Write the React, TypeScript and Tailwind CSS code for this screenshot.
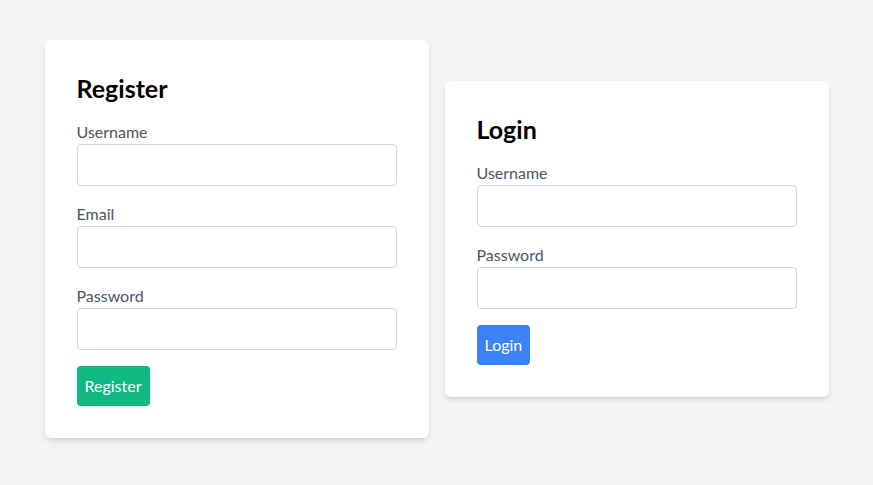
import React from "react";

function Field({ label, type = "text" }: { label: string; type?: string }) {
  return (
    <div className="mb-4">
      <label className="block text-base leading-6 text-[#4b5563]">{label}</label>
      <input
        type={type}
        className="block w-full h-[42px] p-2 border border-[#d1d5db] rounded bg-white outline-none"
      />
    </div>
  );
}

export default function App() {
  return (
    <div
      className="min-h-screen bg-[#f3f4f6] flex items-center justify-center gap-4 pb-[7px]"
      style={{ fontFamily: "Lato, 'Noto Sans', sans-serif" }}
    >
      <div className="w-96 bg-white rounded-md shadow-md p-8">
        <h2 className="text-[25px] leading-8 font-bold text-black mb-4">Register</h2>
        <Field label="Username" />
        <Field label="Email" type="email" />
        <Field label="Password" type="password" />
        <button className="h-10 px-2 rounded bg-[#10b981] text-white text-base leading-6">
          Register
        </button>
      </div>
      <div className="w-96 bg-white rounded-md shadow-md p-8">
        <h2 className="text-[25px] leading-8 font-bold text-black mb-4">Login</h2>
        <Field label="Username" />
        <Field label="Password" type="password" />
        <button className="h-10 px-2 rounded bg-[#3b82f6] text-white text-base leading-6">
          Login
        </button>
      </div>
    </div>
  );
}
